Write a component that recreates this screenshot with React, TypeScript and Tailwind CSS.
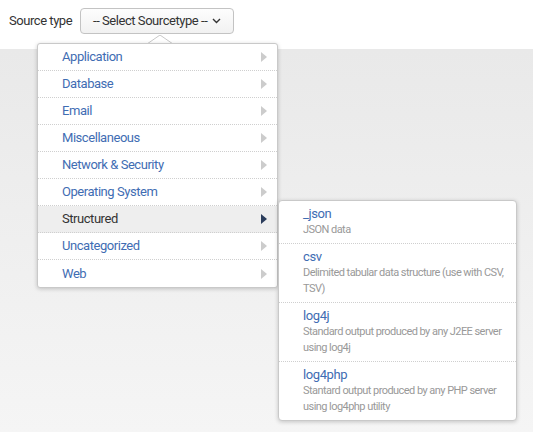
import React from "react";

const font = { fontFamily: "Roboto, 'Liberation Sans', sans-serif" };

const items = [
  "Application",
  "Database",
  "Email",
  "Miscellaneous",
  "Network & Security",
  "Operating System",
  "Structured",
  "Uncategorized",
  "Web",
];

const sub = [
  { t: "_json", d: ["JSON data"] },
  { t: "csv", d: ["Delimited tabular data structure (use with CSV,", "TSV)"] },
  { t: "log4j", d: ["Standard output produced by any J2EE server", "using log4j"] },
  { t: "log4php", d: ["Stantard output produced by any PHP server", "using log4php utility"] },
];

function Tri({ active }: { active?: boolean }) {
  return (
    <svg width="6" height="10" viewBox="0 0 6 10" className="block">
      <path d="M0 0 L6 5 L0 10 Z" fill={active ? "#2b3d5c" : "#cccccc"} />
    </svg>
  );
}

export default function App() {
  return (
    <div className="relative h-[432px] w-[533px] overflow-hidden bg-white" style={font}>
      <div className="flex h-[49px] items-start bg-white pl-[9px] pt-[8px]">
        <span className="mt-[5px] text-[13px] leading-[16px] tracking-[-0.45px] text-[#333]">Source type</span>
        <button className="ml-[8px] flex h-[26px] w-[154px] items-center justify-center gap-[5px] rounded-[4px] border border-[#c3c3c3] bg-gradient-to-b from-[#fdfdfd] to-[#f1f1f1] text-[13px] tracking-[-0.45px] text-[#333]">
          <span>-- Select Sourcetype --</span>
          <svg width="9" height="6" viewBox="0 0 9 6">
            <path d="M1 1 L4.5 4.5 L8 1" fill="none" stroke="#333" strokeWidth="1.4" />
          </svg>
        </button>
      </div>
      <div className="h-[383px] bg-gradient-to-b from-[#e9e9e9] to-[#f5f5f5]" />

      {/* notch */}
      <svg className="absolute left-[147px] top-[35px]" width="26" height="9" viewBox="0 0 26 9">
        <path d="M0 9 L13 0 L26 9 Z" fill="#ffffff" />
        <path d="M0 9 L13 0 L26 9" fill="none" stroke="#c8c8c8" strokeWidth="1" />
      </svg>

      {/* main menu */}
      <div className="absolute left-[37px] top-[43px] w-[241px] rounded-[3px] border border-[#c9c9c9] bg-white shadow-[0_1px_4px_rgba(0,0,0,0.2)]">
        {items.map((it, i) => {
          const active = it === "Structured";
          return (
            <div
              key={it}
              className={`flex h-[27px] items-center justify-between pl-[24px] pr-[10px] text-[13px] tracking-[-0.45px] ${
                i < items.length - 1 ? "border-b border-dotted border-[#cfcfcf]" : ""
              } ${active ? "bg-[#eeeeee] text-[#333]" : "text-[#3f6db3]"}`}
            >
              <span>{it}</span>
              <Tri active={active} />
            </div>
          );
        })}
      </div>

      {/* submenu */}
      <div className="absolute left-[278px] top-[200px] w-[239px] rounded-[4px] border border-[#c9c9c9] bg-white shadow-[0_1px_4px_rgba(0,0,0,0.2)]">
        {sub.map((s, i) => (
          <div
            key={s.t}
            className={`pl-[24px] pr-[4px] pt-[5px] pb-[5px] ${
              i < sub.length - 1 ? "border-b border-dotted border-[#cfcfcf]" : ""
            }`}
          >
            <div className="text-[13px] leading-[16px] tracking-[-0.4px] text-[#3f6db3]">{s.t}</div>
            {s.d.map((l) => (
              <div key={l} className="whitespace-nowrap text-[11px] leading-[16px] tracking-[-0.55px] text-[#999]">
                {l}
              </div>
            ))}
          </div>
        ))}
      </div>
    </div>
  );
}
